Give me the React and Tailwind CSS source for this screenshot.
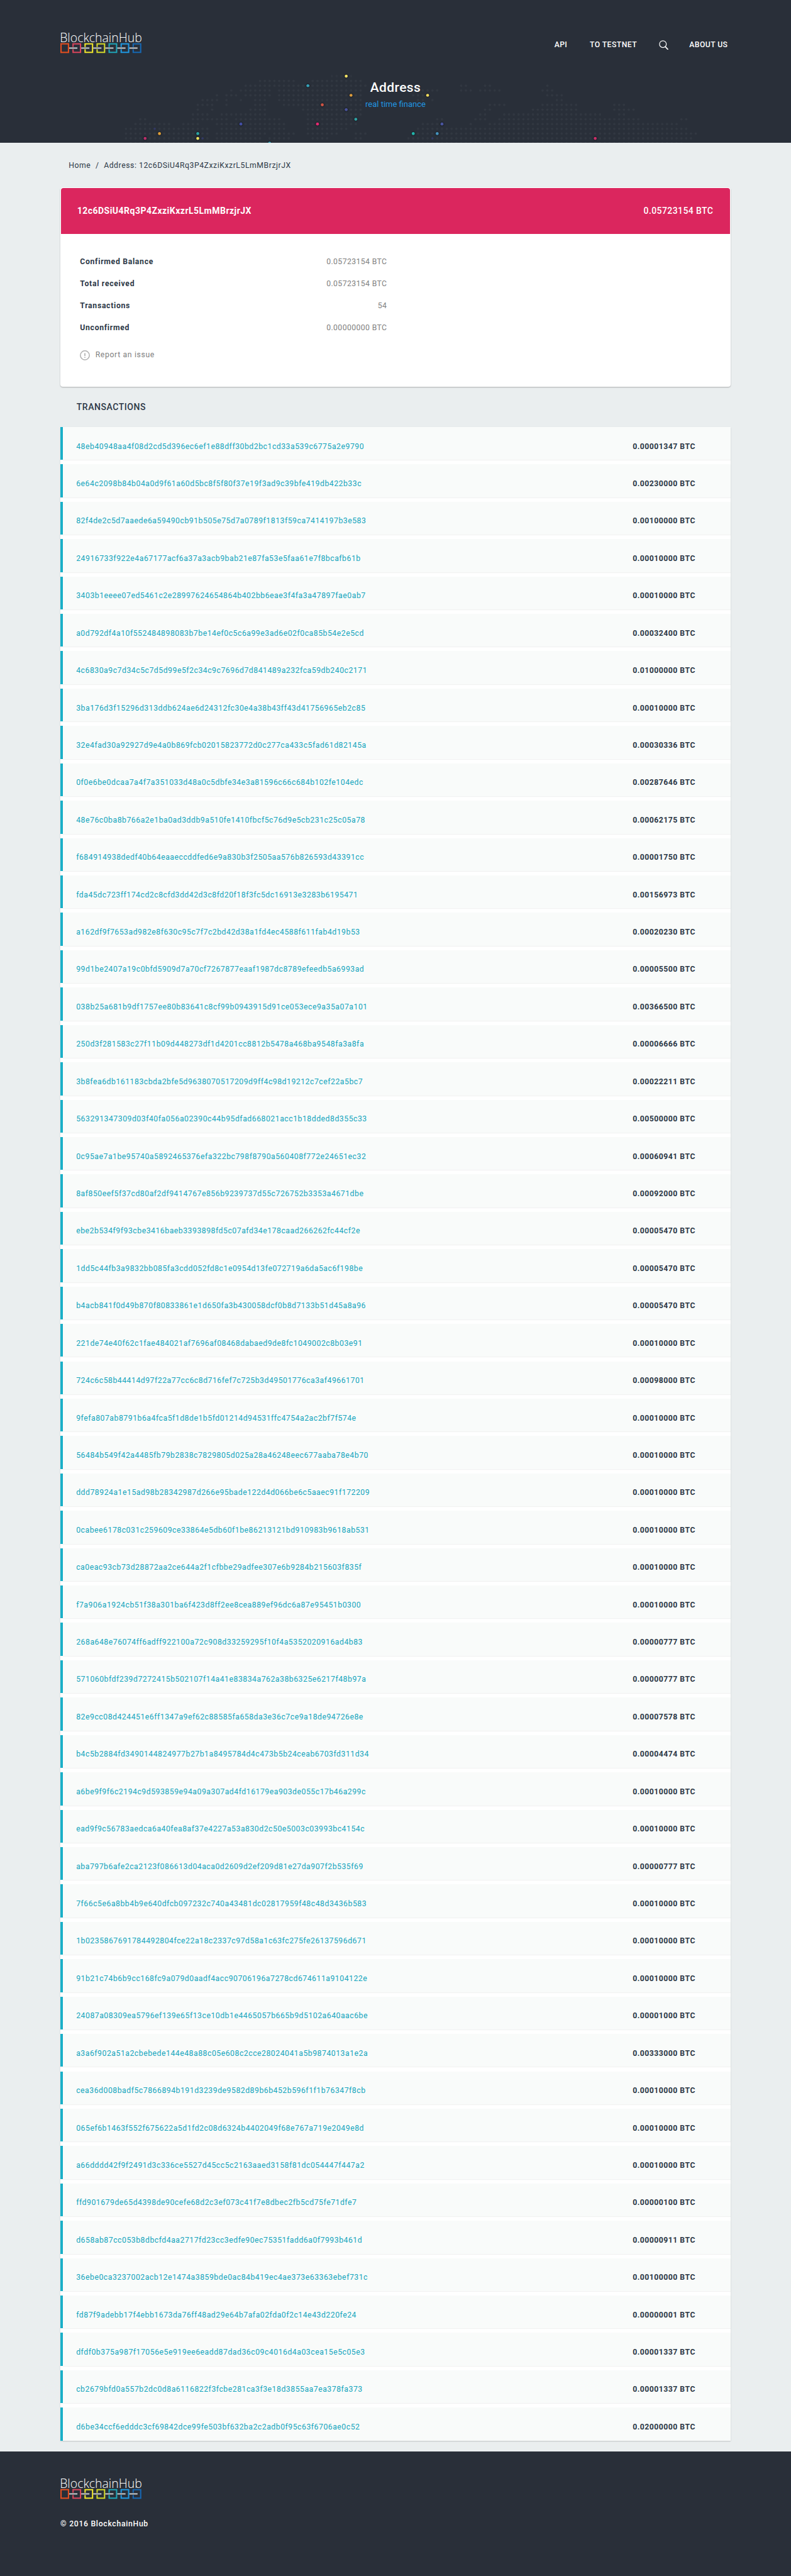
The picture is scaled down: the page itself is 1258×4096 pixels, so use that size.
import React from "react";

const ADDRESS = "12c6DSiU4Rq3P4ZxziKxzrL5LmMBrzjrJX";

const TRANSACTIONS = [
  ["48eb40948aa4f08d2cd5d396ec6ef1e88dff30bd2bc1cd33a539c6775a2e9790", "0.00001347"],
  ["6e64c2098b84b04a0d9f61a60d5bc8f5f80f37e19f3ad9c39bfe419db422b33c", "0.00230000"],
  ["82f4de2c5d7aaede6a59490cb91b505e75d7a0789f1813f59ca7414197b3e583", "0.00100000"],
  ["24916733f922e4a67177acf6a37a3acb9bab21e87fa53e5faa61e7f8bcafb61b", "0.00010000"],
  ["3403b1eeee07ed5461c2e28997624654864b402bb6eae3f4fa3a47897fae0ab7", "0.00010000"],
  ["a0d792df4a10f552484898083b7be14ef0c5c6a99e3ad6e02f0ca85b54e2e5cd", "0.00032400"],
  ["4c6830a9c7d34c5c7d5d99e5f2c34c9c7696d7d841489a232fca59db240c2171", "0.01000000"],
  ["3ba176d3f15296d313ddb624ae6d24312fc30e4a38b43ff43d41756965eb2c85", "0.00010000"],
  ["32e4fad30a92927d9e4a0b869fcb02015823772d0c277ca433c5fad61d82145a", "0.00030336"],
  ["0f0e6be0dcaa7a4f7a351033d48a0c5dbfe34e3a81596c66c684b102fe104edc", "0.00287646"],
  ["48e76c0ba8b766a2e1ba0ad3ddb9a510fe1410fbcf5c76d9e5cb231c25c05a78", "0.00062175"],
  ["f684914938dedf40b64eaaeccddfed6e9a830b3f2505aa576b826593d43391cc", "0.00001750"],
  ["fda45dc723ff174cd2c8cfd3dd42d3c8fd20f18f3fc5dc16913e3283b6195471", "0.00156973"],
  ["a162df9f7653ad982e8f630c95c7f7c2bd42d38a1fd4ec4588f611fab4d19b53", "0.00020230"],
  ["99d1be2407a19c0bfd5909d7a70cf7267877eaaf1987dc8789efeedb5a6993ad", "0.00005500"],
  ["038b25a681b9df1757ee80b83641c8cf99b0943915d91ce053ece9a35a07a101", "0.00366500"],
  ["250d3f281583c27f11b09d448273df1d4201cc8812b5478a468ba9548fa3a8fa", "0.00006666"],
  ["3b8fea6db161183cbda2bfe5d9638070517209d9ff4c98d19212c7cef22a5bc7", "0.00022211"],
  ["563291347309d03f40fa056a02390c44b95dfad668021acc1b18dded8d355c33", "0.00500000"],
  ["0c95ae7a1be95740a5892465376efa322bc798f8790a560408f772e24651ec32", "0.00060941"],
  ["8af850eef5f37cd80af2df9414767e856b9239737d55c726752b3353a4671dbe", "0.00092000"],
  ["ebe2b534f9f93cbe3416baeb3393898fd5c07afd34e178caad266262fc44cf2e", "0.00005470"],
  ["1dd5c44fb3a9832bb085fa3cdd052fd8c1e0954d13fe072719a6da5ac6f198be", "0.00005470"],
  ["b4acb841f0d49b870f80833861e1d650fa3b430058dcf0b8d7133b51d45a8a96", "0.00005470"],
  ["221de74e40f62c1fae484021af7696af08468dabaed9de8fc1049002c8b03e91", "0.00010000"],
  ["724c6c58b44414d97f22a77cc6c8d716fef7c725b3d49501776ca3af49661701", "0.00098000"],
  ["9fefa807ab8791b6a4fca5f1d8de1b5fd01214d94531ffc4754a2ac2bf7f574e", "0.00010000"],
  ["56484b549f42a4485fb79b2838c7829805d025a28a46248eec677aaba78e4b70", "0.00010000"],
  ["ddd78924a1e15ad98b28342987d266e95bade122d4d066be6c5aaec91f172209", "0.00010000"],
  ["0cabee6178c031c259609ce33864e5db60f1be86213121bd910983b9618ab531", "0.00010000"],
  ["ca0eac93cb73d28872aa2ce644a2f1cfbbe29adfee307e6b9284b215603f835f", "0.00010000"],
  ["f7a906a1924cb51f38a301ba6f423d8ff2ee8cea889ef96dc6a87e95451b0300", "0.00010000"],
  ["268a648e76074ff6adff922100a72c908d33259295f10f4a5352020916ad4b83", "0.00000777"],
  ["571060bfdf239d7272415b502107f14a41e83834a762a38b6325e6217f48b97a", "0.00000777"],
  ["82e9cc08d424451e6ff1347a9ef62c88585fa658da3e36c7ce9a18de94726e8e", "0.00007578"],
  ["b4c5b2884fd3490144824977b27b1a8495784d4c473b5b24ceab6703fd311d34", "0.00004474"],
  ["a6be9f9f6c2194c9d593859e94a09a307ad4fd16179ea903de055c17b46a299c", "0.00010000"],
  ["ead9f9c56783aedca6a40fea8af37e4227a53a830d2c50e5003c03993bc4154c", "0.00010000"],
  ["aba797b6afe2ca2123f086613d04aca0d2609d2ef209d81e27da907f2b535f69", "0.00000777"],
  ["7f66c5e6a8bb4b9e640dfcb097232c740a43481dc02817959f48c48d3436b583", "0.00010000"],
  ["1b0235867691784492804fce22a18c2337c97d58a1c63fc275fe26137596d671", "0.00010000"],
  ["91b21c74b6b9cc168fc9a079d0aadf4acc90706196a7278cd674611a9104122e", "0.00010000"],
  ["24087a08309ea5796ef139e65f13ce10db1e4465057b665b9d5102a640aac6be", "0.00001000"],
  ["a3a6f902a51a2cbebede144e48a88c05e608c2cce28024041a5b9874013a1e2a", "0.00333000"],
  ["cea36d008badf5c7866894b191d3239de9582d89b6b452b596f1f1b76347f8cb", "0.00010000"],
  ["065ef6b1463f552f675622a5d1fd2c08d6324b4402049f68e767a719e2049e8d", "0.00010000"],
  ["a66dddd42f9f2491d3c336ce5527d45cc5c2163aaed3158f81dc054447f447a2", "0.00010000"],
  ["ffd901679de65d4398de90cefe68d2c3ef073c41f7e8dbec2fb5cd75fe71dfe7", "0.00000100"],
  ["d658ab87cc053b8dbcfd4aa2717fd23cc3edfe90ec75351fadd6a0f7993b461d", "0.00000911"],
  ["36ebe0ca3237002acb12e1474a3859bde0ac84b419ec4ae373e63363ebef731c", "0.00100000"],
  ["fd87f9adebb17f4ebb1673da76ff48ad29e64b7afa02fda0f2c14e43d220fe24", "0.00000001"],
  ["dfdf0b375a987f17056e5e919ee6eadd87dad36c09c4016d4a03cea15e5c05e3", "0.00001337"],
  ["cb2679bfd0a557b2dc0d8a6116822f3fcbe281ca3f3e18d3855aa7ea378fa373", "0.00001337"],
  ["d6be34ccf6edddc3cf69842dce99fe503bf632ba2c2adb0f95c63f6706ae0c52", "0.02000000"],
];

// Column ranges of land dots for each row of the world map.
const MAP_ROWS = [
  [[43, 47]],
  [[28, 35], [39, 49]],
  [[25, 50], [70, 71], [75, 76], [88, 88]],
  [[22, 22], [24, 30], [32, 49], [62, 65], [70, 72], [74, 78], [87, 89]],
  [[19, 19], [21, 23], [25, 30], [32, 49], [60, 63], [88, 91]],
  [[16, 19], [21, 21], [24, 24], [27, 29], [32, 49], [61, 62], [64, 64], [90, 91]],
  [[15, 18], [21, 21], [27, 29], [33, 49], [76, 79], [87, 94], [102, 104]],
  [[15, 15], [18, 18], [26, 29], [37, 49], [75, 76], [85, 94], [102, 106]],
  [[14, 17], [20, 29], [38, 49], [74, 75], [79, 99], [103, 104]],
  [[3, 4], [14, 21], [23, 32], [38, 48], [65, 66], [73, 75], [78, 107], [116, 117]],
  [[2, 9], [12, 15], [19, 33], [38, 48], [62, 66], [72, 72], [76, 115]],
  [[0, 17], [20, 33], [38, 46], [61, 117]],
  [[0, 17], [19, 29], [31, 35], [38, 44], [48, 50], [60, 119]],
  [[0, 17], [19, 28], [30, 34], [39, 42], [48, 49], [59, 118]],
  [[1, 16], [20, 28], [60, 116]],
];

const PINS = [
  [46, 0, "#f4e264"], [38, 2, "#35a3ba"], [47, 4, "#dc9b3c"], [41, 6, "#cf5444"],
  [46, 7, "#4a539b"], [48, 9, "#2fa3a3"], [40, 10, "#e32a70"], [24, 10, "#434ea3"],
  [7, 12, "#e0a038"], [15, 12, "#2ba6a4"], [4, 13, "#bb2f6b"], [15, 13, "#f0e560"],
  [30, 14, "#35a3ba"], [63, 4, "#f4dc5c"], [66, 10, "#4a559f"], [60, 12, "#22b5ab"],
  [65, 12, "#4593bd"], [98, 13, "#cc2f69"],
];

const FAINT_PINS = [[6, 11], [16, 13], [64, 13]];

const PITCH = 8.717;
const mapX = (c) => 229.3 + c * PITCH;
const mapY = (r) => 138.5 + r * PITCH;

function WorldMap() {
  return (
    <svg className="absolute inset-0 h-full w-full" viewBox="0 0 1440 260" preserveAspectRatio="none">
      {MAP_ROWS.map((ranges, r) =>
        ranges.map(([from, to]) =>
          Array.from({ length: to - from + 1 }, (_, i) => (
            <circle key={`${r}-${from + i}`} cx={mapX(from + i)} cy={mapY(r)} r="2.2" fill="#3b424c" opacity={r < 1 ? 0.3 : 0.45} />
          ))
        )
      )}
      {FAINT_PINS.map(([c, r]) => (
        <circle key={`f${c}-${r}`} cx={mapX(c)} cy={mapY(r)} r="2" fill="#33396f" opacity="0.8" />
      ))}
      {PINS.map(([c, r, fill]) => (
        <g key={`p${c}-${r}`}>
          <circle cx={mapX(c)} cy={mapY(r)} r="4.2" fill="#1c222b" opacity="0.7" />
          <circle cx={mapX(c)} cy={mapY(r)} r="2.7" fill={fill} />
        </g>
      ))}
    </svg>
  );
}

const LINKS = ["#e04e20", "#d9455c", "#efe52c", "#d3d82a", "#1fa5b8", "#1e98e2", "#1668b3"];

function Logo() {
  return (
    <svg className="block h-[32.4px] w-[130px] overflow-visible" viewBox="0 0 148.8 37">
      <text x="-1" y="16.6" textLength="149.5" lengthAdjust="spacingAndGlyphs" fill="#fff" className="font-['Open_Sans'] text-[22px] font-light">
        BlockchainHub
      </text>
      {LINKS.map((color, i) => {
        const x = i * 21.9;
        return i === 0 ? (
          <rect key={color} x={x + 1.2} y="20.2" width="13.6" height="15.6" fill="none" stroke={color} strokeWidth="2.4" />
        ) : (
          <path key={color} d={`M${x + 1.2} 26V20.2H${x + 14.8}V35.8H${x + 1.2}V30`} fill="none" stroke={color} strokeWidth="2.4" />
        );
      })}
      {LINKS.slice(1).map((color, i) => (
        <rect key={color} x={i * 21.9 + 16} y="26.9" width="15" height="2.1" fill="#d9dcde" />
      ))}
    </svg>
  );
}

function Header() {
  return (
    <header className="relative h-[227.2px] overflow-hidden bg-[#292f39] text-white">
      <WorldMap />
      <div className="relative flex justify-between pr-[100.6px] pl-[96.1px]">
        <div className="pt-[52.4px]">
          <Logo />
        </div>
        <nav className="flex pt-[61.2px] text-[12.23px] leading-[20px] font-medium tracking-[0.42px]">
          <a className="ml-[35.8px]">API</a>
          <a className="ml-[35.8px]">TO TESTNET</a>
          <a className="ml-[35px] pt-[3px]">
            <svg className="block h-[15px] w-[15px]" viewBox="0 0 15 15" fill="none" stroke="#fff" strokeWidth="1.2" strokeLinecap="round">
              <circle cx="6.3" cy="6.2" r="5.4" />
              <path d="M10.2 10.4L14 14.4" strokeWidth="1.7" />
            </svg>
          </a>
          <a className="ml-[33.2px]">ABOUT US</a>
        </nav>
      </div>
      <div className="relative pt-[40.3px] text-center">
        <h1 className="text-[21px] leading-[28px] font-medium tracking-[0.4px]">Address</h1>
        <p className="pt-[3.4px] text-[13px] leading-[20px] text-[#2196e3]">real time finance</p>
      </div>
    </header>
  );
}

const SUMMARY = [
  ["Confirmed Balance", "0.05723154 BTC"],
  ["Total received", "0.05723154 BTC"],
  ["Transactions", "54"],
  ["Unconfirmed", "0.00000000 BTC"],
];

function SummaryCard() {
  return (
    <section className="mt-[24.9px] h-[317.3px] rounded-[4px] bg-white shadow-[0_1px_2px_rgba(0,0,0,0.28)]">
      <div className="px-px pt-px">
        <div className="flex h-[73.4px] justify-between rounded-t-[4px] bg-[#db265e] pt-[26.2px] pr-[26.6px] pl-[25.6px] text-[14px] leading-[20px] text-white">
          <strong className="font-bold tracking-[0.48px]">{ADDRESS}</strong>
          <span className="font-medium tracking-[0.4px]">0.05723154 BTC</span>
        </div>
      </div>
      <dl className="w-[519.3px] pt-[34px] pl-[31.2px] text-[12.23px] tracking-[0.4px]">
        {SUMMARY.map(([label, value]) => (
          <div key={label} className="flex h-[34.95px] justify-between leading-[20px]">
            <dt className="font-bold tracking-[0.7px] text-[#2c3846]">{label}</dt>
            <dd className="text-[#808080]">{value}</dd>
          </div>
        ))}
      </dl>
      <div className="flex pt-[7.6px] pl-[31.4px] text-[12.23px] leading-[20px] tracking-[0.65px] text-[#808080]">
        <svg className="mt-[3.6px] mr-[8.2px] block h-[16px] w-[16px]" viewBox="0 0 16 16" fill="none" stroke="#b0b0b0" strokeWidth="1.5">
          <circle cx="8" cy="8" r="7.2" />
          <path d="M8 4.4V9M8 10.4V12" strokeWidth="1.7" />
        </svg>
        <span>Report an issue</span>
      </div>
    </section>
  );
}

function TransactionList() {
  return (
    <ul className="bg-white shadow-[0_1px_2px_rgba(0,0,0,0.12)]">
      {TRANSACTIONS.map(([hash, amount]) => (
        <li key={hash} className="h-[59.425px] last:h-[52.4px]">
          <div className="flex h-[52.4px]">
            <div className="w-[3.5px] bg-[#1ab0c8]" />
            <div className="flex flex-1 justify-between bg-[#f9fbfa] pt-[20.6px] pr-[56px] pl-[21.6px] text-[12.23px] leading-[20px] shadow-[0_1px_1px_rgba(0,0,0,0.05)]">
              <a className="tracking-[0.53px] text-[#14a5bd]">{hash}</a>
              <span className="font-bold tracking-[0.5px] text-[#2c3846]">{amount} BTC</span>
            </div>
          </div>
        </li>
      ))}
    </ul>
  );
}

export default function App() {
  return (
    <div className="h-[4096px] w-[1258px] overflow-hidden bg-[#eaeeef] font-['Roboto',sans-serif]">
      <Header />
      <main className="h-[3670.4px] px-[96.1px]">
        <nav className="flex pt-[25.9px] pl-[13.2px] text-[12.23px] leading-[20px] tracking-[0.55px] text-[#2c3846]">
          <a>Home</a>
          <span className="px-[7.6px]">/</span>
          <span>Address: {ADDRESS}</span>
        </nav>
        <SummaryCard />
        <h2 className="h-[63.7px] pt-[21.6px] pl-[25.6px] text-[14px] leading-[20px] font-medium tracking-[0.55px] text-[#2c3846]">
          TRANSACTIONS
        </h2>
        <TransactionList />
      </main>
      <footer className="h-[198.4px] bg-[#292f39] pt-[43.8px] pl-[96.1px] text-white">
        <Logo />
        <p className="pt-[28.8px] text-[12.23px] leading-[20px] font-medium tracking-[0.7px]">© 2016 BlockchainHub</p>
      </footer>
    </div>
  );
}
